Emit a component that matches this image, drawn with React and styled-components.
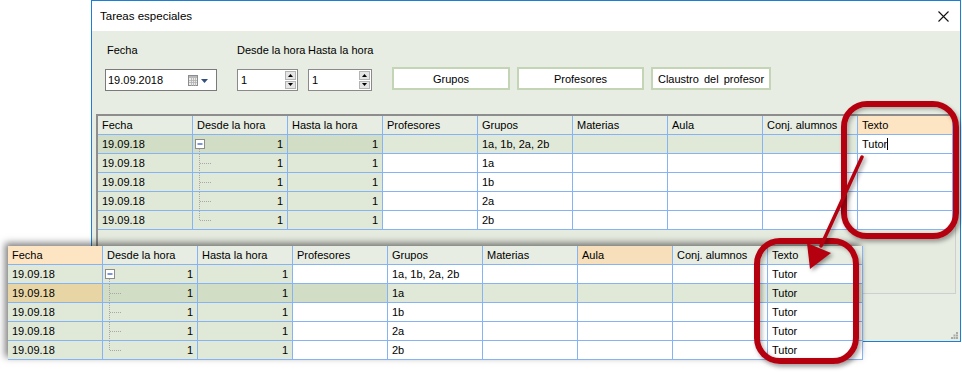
import React from 'react';
import styled, { createGlobalStyle } from 'styled-components';

const GlobalStyle = createGlobalStyle`
  html, body { margin: 0; padding: 0; background: #fff; }
  body {
    font-family: "Liberation Sans", Arial, sans-serif;
    font-size: 11px;
    color: #000;
  }
`;

const Canvas = styled.div`
  position: relative;
  width: 962px;
  height: 373px;
  overflow: hidden;
  background: #fff;
`;

const Dialog = styled.div`
  margin-left: 91px;
  width: 870px;
  height: 342px;
  box-sizing: border-box;
  border: 1px solid #1b7fd4;
  display: flex;
  flex-direction: column;
  background: #e7ede2;
`;

const TitleBar = styled.div`
  height: 30px;
  flex: none;
  background: #fff;
  display: flex;
  align-items: center;
  justify-content: space-between;
  padding: 0 8px 0 8px;
  font-size: 11.5px;
`;

const Body = styled.div`
  flex: 1;
  display: flex;
  flex-direction: column;
  padding: 13px 0 0 0;
`;

const Controls = styled.div`
  display: flex;
  align-items: flex-end;
  padding-left: 13px;
`;

const Field = styled.div`
  display: flex;
  flex-direction: column;
  gap: 12px;
  width: ${p => p.$w}px;
  margin-right: ${p => p.$mr || 0}px;
  white-space: nowrap;
`;

const Label = styled.div`
  line-height: 13px;
  padding-left: ${p => p.$pl || 0}px;
`;

const DateBox = styled.div`
  width: 112px;
  height: 22px;
  box-sizing: border-box;
  border: 1px solid #7a7a7a;
  background: #fff;
  display: flex;
  align-items: center;
  padding: 0 7px 0 2px;
  gap: 4px;
  span { flex: 1; }
`;

const SpinBox = styled.div`
  width: ${p => p.$w}px;
  height: 22px;
  box-sizing: border-box;
  border: 1px solid #8a8a8a;
  background: #fff;
  display: flex;
  align-items: center;
  padding: 1px 1px 1px 3px;
  span { flex: 1; }
`;

const SpinButtons = styled.div`
  width: 11px;
  height: 100%;
  display: flex;
  flex-direction: column;
  gap: 1px;
`;

const SpinButton = styled.div`
  flex: 1;
  background: #e5e5e5;
  border: 1px solid #b4b4b4;
  display: flex;
  align-items: center;
  justify-content: center;
`;

const ActionButton = styled.div`
  width: ${p => p.$w}px;
  height: 23px;
  box-sizing: border-box;
  margin: 0 ${p => p.$mr || 0}px 1px 0;
  background: #fff;
  border: 2px solid #c3d5b4;
  display: flex;
  align-items: center;
  justify-content: center;
  word-spacing: 2px;
`;

const GridFrame = styled.div`
  margin: 23px 0 0 4px;
  width: 860px;
  height: 180px;
  box-sizing: border-box;
  border-style: solid;
  border-width: 2px 1px 1px 2px;
  border-color: #8d8d8d #cfcfcf #cfcfcf #8d8d8d;
  background: #e6ebe0;
`;

const Table = styled.div`
  display: grid;
  grid-template-columns: repeat(9, 95px);
  grid-auto-rows: 19px;
  background: #fff;
  width: 855px;
`;

const Cell = styled.div`
  box-sizing: border-box;
  border-right: 1px solid #86b3f3;
  border-bottom: 1px solid #86b3f3;
  background: ${p => p.$bg || '#fff'};
  display: flex;
  align-items: center;
  justify-content: ${p => (p.$right ? 'space-between' : 'flex-start')};
  padding: 0 4px 0 ${p => (p.$tree ? 2 : 4)}px;
  white-space: nowrap;
  overflow: hidden;
`;

const Caret = styled.i`
  display: inline-block;
  width: 1px;
  height: 12px;
  background: #000;
`;

const Grip = styled.div`
  margin-top: auto;
  align-self: flex-end;
  margin: auto 2px 2px 0;
  line-height: 0;
`;

const Overlay = styled.div`
  position: absolute;
  left: 8px;
  top: 246px;
  box-shadow: -3px -3px 7px rgba(0, 0, 0, 0.5);
`;

const RedFrame = styled.div`
  position: absolute;
  left: ${p => p.$x}px;
  top: ${p => p.$y}px;
  width: ${p => p.$w}px;
  height: ${p => p.$h}px;
  box-sizing: border-box;
  border: 6px solid #b5000f;
  border-radius: 26px;
  box-shadow: 2px 3px 4px rgba(0, 0, 0, 0.35), inset 2px 2px 4px rgba(0, 0, 0, 0.3);
`;

const ArrowLayer = styled.svg`
  position: absolute;
  left: 0;
  top: 0;
  pointer-events: none;
  filter: drop-shadow(2px 2px 2px rgba(0, 0, 0, 0.4));
`;

const COLS = ['Fecha', 'Desde la hora', 'Hasta la hora', 'Profesores', 'Grupos', 'Materias', 'Aula', 'Conj. alumnos', 'Texto'];
const GROUPS = ['1a, 1b, 2a, 2b', '1a', '1b', '2a', '2b'];

const C = {
  head: '#e7ede2',
  peach: '#fde5c3',
  peach2: '#f6dfba',
  frozen: '#e0e8d8',
  selDark: '#d1ddc4',
  selLight: '#e0e8d8',
  tan: '#e8d5a6',
};

function TreeGlyph({ index, last }) {
  if (index === 0) {
    return (
      <svg width="12" height="18" viewBox="0 0 12 18">
        <line x1="4.5" y1="14" x2="4.5" y2="18" stroke="#a8a8a8" strokeDasharray="1 1" />
        <rect x="0.5" y="4.5" width="9" height="9" fill="#fff" stroke="#8c8c8c" />
        <line x1="2.5" y1="9" x2="7.5" y2="9" stroke="#2a4fc0" strokeWidth="1.2" />
      </svg>
    );
  }
  return (
    <svg width="18" height="18" viewBox="0 0 18 18">
      <line x1="4.5" y1="0" x2="4.5" y2={last ? 9 : 18} stroke="#a8a8a8" strokeDasharray="1 1" />
      <line x1="5" y1="9.5" x2="17" y2="9.5" stroke="#a8a8a8" strokeDasharray="1 1" />
    </svg>
  );
}

function DataGrid({ headBg, rowBg, texto }) {
  return (
    <Table>
      {COLS.map((c, i) => (
        <Cell key={c} $bg={headBg(i)}>{c}</Cell>
      ))}
      {GROUPS.map((g, r) =>
        COLS.map((c, i) => {
          const bg = rowBg(r, i);
          if (i === 0) return <Cell key={c + r} $bg={bg}>19.09.18</Cell>;
          if (i === 1)
            return (
              <Cell key={c + r} $bg={bg} $right $tree>
                <TreeGlyph index={r} last={r === GROUPS.length - 1} />
                <span>1</span>
              </Cell>
            );
          if (i === 2)
            return (
              <Cell key={c + r} $bg={bg} $right>
                <span />
                <span>1</span>
              </Cell>
            );
          if (i === 4) return <Cell key={c + r} $bg={bg}>{g}</Cell>;
          if (i === 8) return <Cell key={c + r} $bg={bg}>{texto(r)}</Cell>;
          return <Cell key={c + r} $bg={bg} />;
        })
      )}
    </Table>
  );
}

function CalendarIcon() {
  return (
    <svg width="21" height="11" viewBox="0 0 21 11">
      <rect x="0.5" y="0.5" width="9" height="10" fill="#ececec" stroke="#8c8c8c" />
      <rect x="1" y="1" width="8" height="2" fill="#b8b8b8" />
      <path d="M1 5.5h8M1 7.5h8M3.5 3v8M5.5 3v8M7.5 3v8" stroke="#b0b0b0" strokeWidth="0.8" />
      <polygon points="13,4 20,4 16.5,8" fill="#334f7c" />
    </svg>
  );
}

function Spinner({ w }) {
  return (
    <SpinBox $w={w}>
      <span>1</span>
      <SpinButtons>
        <SpinButton>
          <svg width="5" height="3"><polygon points="0,3 5,3 2.5,0" fill="#000" /></svg>
        </SpinButton>
        <SpinButton>
          <svg width="5" height="3"><polygon points="0,0 5,0 2.5,3" fill="#000" /></svg>
        </SpinButton>
      </SpinButtons>
    </SpinBox>
  );
}

export default function App() {
  return (
    <Canvas>
      <GlobalStyle />
      <Dialog>
        <TitleBar>
          <span>Tareas especiales</span>
          <svg width="11" height="11" viewBox="0 0 11 11" style={{ marginRight: 3 }}>
            <path d="M0.5 0.5L10.5 10.5M10.5 0.5L0.5 10.5" stroke="#111" strokeWidth="1.1" />
          </svg>
        </TitleBar>
        <Body>
          <Controls>
            <Field $w={112} $mr={20}>
              <Label $pl={2}>Fecha</Label>
              <DateBox>
                <span>19.09.2018</span>
                <CalendarIcon />
              </DateBox>
            </Field>
            <Field $w={71}>
              <Label>Desde la hora</Label>
              <Spinner w={61} />
            </Field>
            <Field $w={64} $mr={20}>
              <Label>Hasta la hora</Label>
              <Spinner w={64} />
            </Field>
            <ActionButton $w={118} $mr={7}>Grupos</ActionButton>
            <ActionButton $w={127} $mr={7}>Profesores</ActionButton>
            <ActionButton $w={120}>Claustro del profesor</ActionButton>
          </Controls>
          <GridFrame>
            <DataGrid
              headBg={i => (i === 8 ? C.peach : C.head)}
              rowBg={(r, i) => {
                if (r === 0) {
                  if (i === 8) return '#fff';
                  return i < 3 ? C.selDark : C.selLight;
                }
                return i < 3 ? C.frozen : '#fff';
              }}
              texto={r => (r === 0 ? <>Tutor<Caret /></> : null)}
            />
          </GridFrame>
          <Grip>
            <svg width="7" height="7" viewBox="0 0 7 7">
              <g fill="#a9a9a9">
                <rect x="5" y="0" width="2" height="2" />
                <rect x="2.5" y="2.5" width="2" height="2" />
                <rect x="5" y="2.5" width="2" height="2" />
                <rect x="0" y="5" width="2" height="2" />
                <rect x="2.5" y="5" width="2" height="2" />
                <rect x="5" y="5" width="2" height="2" />
              </g>
            </svg>
          </Grip>
        </Body>
      </Dialog>

      <Overlay>
        <DataGrid
          headBg={i => (i === 0 ? C.peach : i === 6 ? C.peach2 : C.head)}
          rowBg={(r, i) => {
            if (r === 1) {
              if (i === 0) return C.tan;
              return i < 4 ? C.selDark : C.selLight;
            }
            return i < 3 ? C.frozen : '#fff';
          }}
          texto={() => 'Tutor'}
        />
      </Overlay>

      <RedFrame $x={841} $y={101} $w={118} $h={138} />
      <RedFrame $x={754} $y={238} $w={105} $h={126} />

      <ArrowLayer width="962" height="373" viewBox="0 0 962 373">
        <line x1="862" y1="157" x2="821" y2="246" stroke="#b5000f" strokeWidth="3.5" strokeLinecap="round" />
        <polygon points="810,269 807,243 831,253" fill="#b5000f" />
      </ArrowLayer>
    </Canvas>
  );
}
